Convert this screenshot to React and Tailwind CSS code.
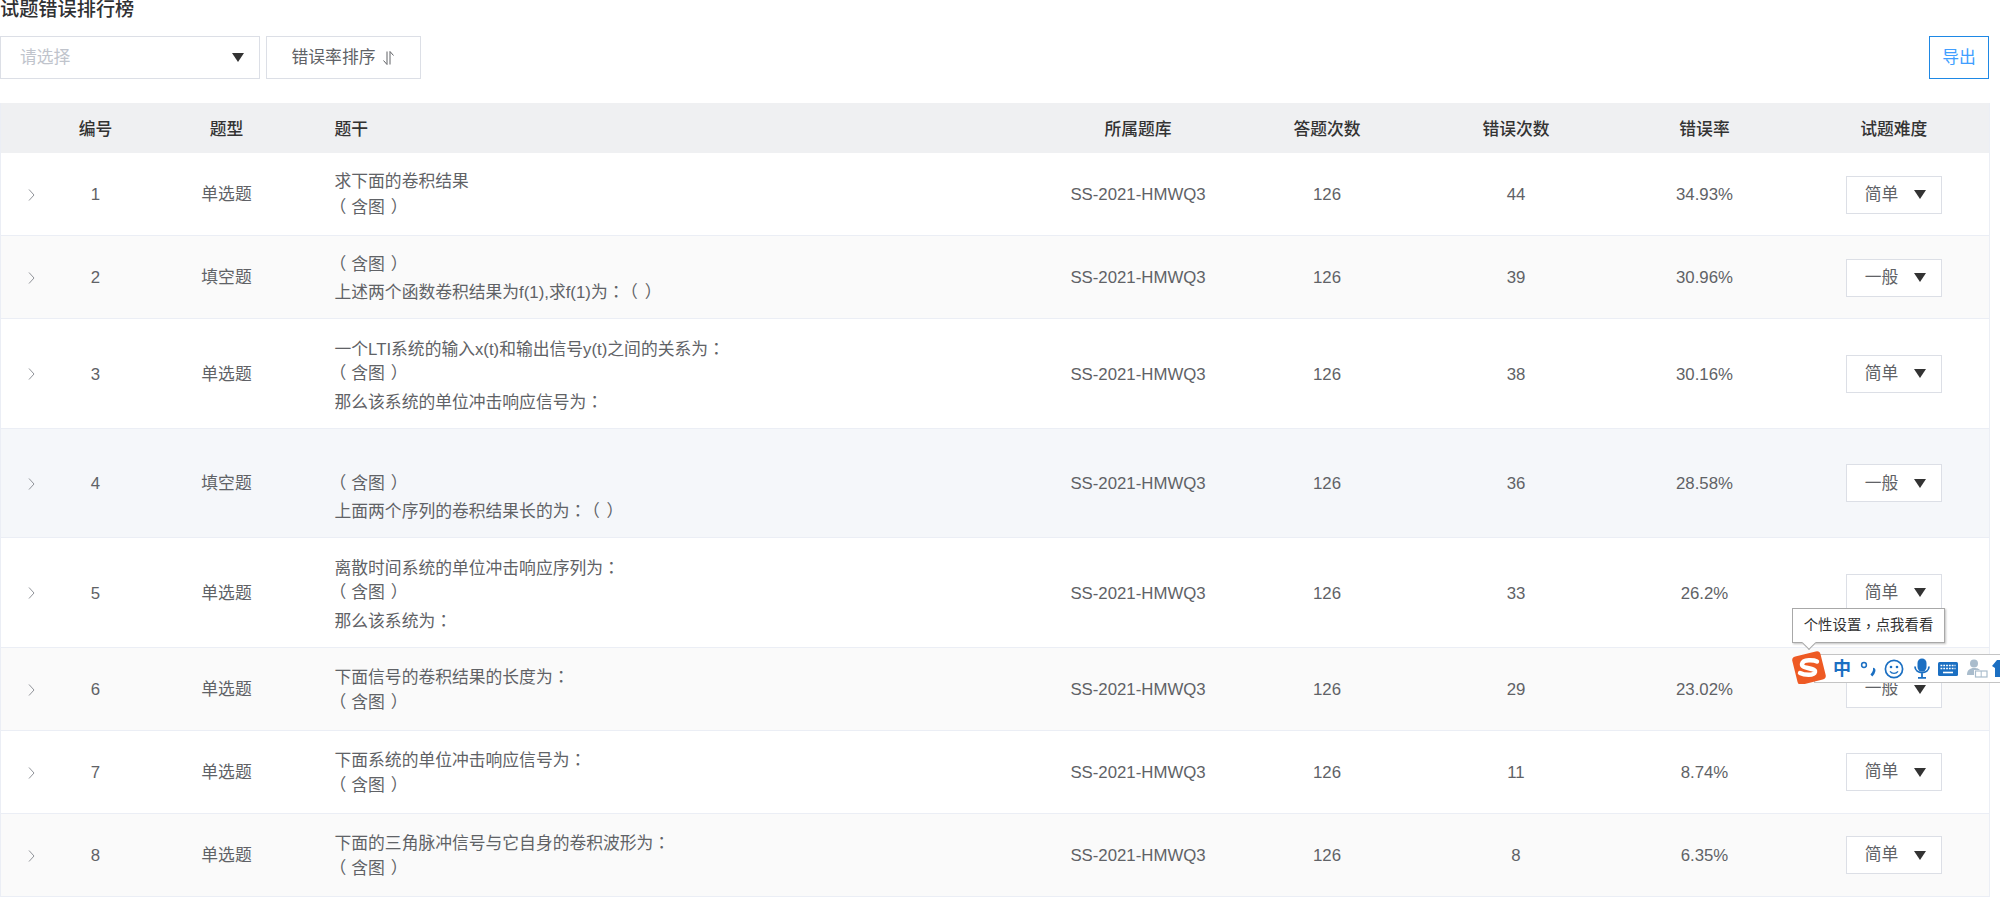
import React from 'react';

const rows = [
  { id: 1, type: '单选题', lines: ['求下面的卷积结果', '（含图）'], wrong: 44, rate: '34.93%', level: '简单' },
  { id: 2, type: '填空题', lines: ['（含图）', '上述两个函数卷积结果为f(1),求f(1)为：（ ）'], wrong: 39, rate: '30.96%', level: '一般' },
  { id: 3, type: '单选题', lines: ['一个LTI系统的输入x(t)和输出信号y(t)之间的关系为：', '（含图）', '那么该系统的单位冲击响应信号为：'], wrong: 38, rate: '30.16%', level: '简单' },
  { id: 4, type: '填空题', lines: ['', '（含图）', '上面两个序列的卷积结果长的为：（ ）'], wrong: 36, rate: '28.58%', level: '一般' },
  { id: 5, type: '单选题', lines: ['离散时间系统的单位冲击响应序列为：', '（含图）', '那么该系统为：'], wrong: 33, rate: '26.2%', level: '简单' },
  { id: 6, type: '单选题', lines: ['下面信号的卷积结果的长度为：', '（含图）'], wrong: 29, rate: '23.02%', level: '一般' },
  { id: 7, type: '单选题', lines: ['下面系统的单位冲击响应信号为：', '（含图）'], wrong: 11, rate: '8.74%', level: '简单' },
  { id: 8, type: '单选题', lines: ['下面的三角脉冲信号与它自身的卷积波形为：', '（含图）'], wrong: 8, rate: '6.35%', level: '简单' },
];

// full-width punctuation sits centred in its cell in the reference
function Stem({ text }) {
  return text.split(/(（ ）|（|）|：|，)/).map((part, i) => {
    if (part === '（ ）') {
      return (
        <span key={i}>
          <span className="inline-block -translate-x-[0.2em]">（</span>
          <span className="inline-block translate-x-[0.2em]">）</span>
        </span>
      );
    }
    if (part === '（') return <span key={i} className="inline-block -translate-x-[0.3em]">（</span>;
    if (part === '）') return <span key={i} className="inline-block translate-x-[0.35em]">）</span>;
    if (part === '：' || part === '，') {
      return <span key={i} className="inline-block font-['Noto_Sans_CJK_TC',sans-serif]">{part}</span>;
    }
    return part;
  });
}

function Caret() {
  return (
    <svg width="12" height="9" viewBox="0 0 12 9" className="shrink-0 text-[#333]">
      <path d="M0 0H12L6 9Z" fill="currentColor" />
    </svg>
  );
}

function SogouBar() {
  return (
    <div className="absolute left-[1792px] top-[608px] w-[208px] h-[76px] overflow-hidden">
      <div className="relative w-[153px] h-[35px] bg-white border border-[#a8a8a8] shadow-[1px_1px_2px_rgba(0,0,0,0.25)] flex items-center justify-center text-[14.4px] text-[#333] whitespace-nowrap">
        <Stem text="个性设置，点我看看" />
        <span className="absolute left-[11px] bottom-[-6px] w-[10px] h-[10px] bg-white border-r border-b border-[#a8a8a8] rotate-45" />
      </div>
      <div className="absolute left-[22px] top-[46px] w-[190px] h-[29px] bg-white border border-[#c4c4c4] flex items-center">
        <span className="ml-[18px] w-[18px] text-[18px] leading-none font-bold text-[#1b6fc2]">中</span>
        <svg width="16" height="18" viewBox="0 0 16 18" className="ml-[9px] shrink-0 text-[#1b6fc2]">
          <circle cx="4" cy="5" r="2.4" fill="none" stroke="currentColor" strokeWidth="1.5" />
          <path d="M13 9c1.6 0 2 2.6-1.6 6.5" fill="none" stroke="currentColor" strokeWidth="2.6" />
        </svg>
        <svg width="20" height="20" viewBox="0 0 20 20" className="ml-[8px] shrink-0 text-[#1b6fc2]">
          <circle cx="10" cy="10" r="8.6" fill="none" stroke="currentColor" strokeWidth="1.7" />
          <circle cx="7" cy="8" r="1.3" fill="currentColor" />
          <circle cx="13" cy="8" r="1.3" fill="currentColor" />
          <path d="M6 12.4c2 2.6 6 2.6 8 0" fill="none" stroke="currentColor" strokeWidth="1.4" />
        </svg>
        <svg width="16" height="21" viewBox="0 0 16 21" className="ml-[10px] shrink-0 text-[#1b6fc2]">
          <rect x="3.500" y="0.500" width="9" height="13" rx="4.500" fill="currentColor" />
          <path d="M1 8.500c0 8 14 8 14 0M8 15v4M4 19.800h8" fill="none" stroke="currentColor" strokeWidth="1.8" />
        </svg>
        <svg width="20" height="14" viewBox="0 0 20 14" className="ml-[8px] shrink-0">
          <rect width="20" height="14" rx="1.500" fill="#1b6fc2" />
          <path d="M2.500 3.500h15M2.500 6.500h15" stroke="#fff" strokeWidth="1.500" strokeDasharray="1.800 1" />
          <path d="M5 10.500h10" stroke="#fff" strokeWidth="1.600" />
        </svg>
        <svg width="22" height="19" viewBox="0 0 22 19" className="ml-[8px] shrink-0 text-[#a9bccc]">
          <circle cx="8" cy="4.500" r="4" fill="currentColor" />
          <path d="M1 16c0-5 3-7 7-7s5 1 6 2H8v5Z" fill="currentColor" />
          <rect x="9.500" y="12" width="11.500" height="6" fill="none" stroke="currentColor" strokeWidth="1.200" />
          <path d="M15.200 12v6" stroke="currentColor" strokeWidth="1" />
        </svg>
        <svg width="16" height="17" viewBox="0 0 16 17" className="ml-[4px] shrink-0 text-[#1b6fc2]">
          <path d="M5 0h6l5 6-3 2v9H3V8L0 6Z" fill="currentColor" />
        </svg>
      </div>
      <svg width="36" height="36" viewBox="0 0 36 36" className="absolute left-[-1px] top-[42px]">
        <rect x="3.500" y="3.500" width="29" height="29" rx="4" fill="#ee5a24" transform="rotate(-14 18 18)" />
        <path d="M26 11.500c-3-1.500-14-2.500-15 2.500s14 3.500 13 8c-1 4-11 3-15 1" fill="none" stroke="#fff" strokeWidth="4.400" strokeLinecap="round" />
      </svg>
    </div>
  );
}

export default function App() {
  return (
    <div className="relative w-[2000px] h-[897px] overflow-hidden bg-white font-['Liberation_Sans','Noto_Sans_CJK_SC',sans-serif] text-[16.8px] text-[#606266]">
      <h1 className="h-[36px] text-[19.2px] leading-[20px] font-medium text-[#303133]">试题错误排行榜</h1>
      <div className="w-[1989px] flex items-center gap-[6px]">
        <div className="w-[260px] h-[43px] pl-[19px] pr-[15px] flex items-center justify-between border border-[#dcdfe6] text-[#c0c4cc]">
          <span>请选择</span>
          <Caret />
        </div>
        <div className="w-[155px] h-[43px] flex items-center justify-center gap-[7px] border border-[#dcdfe6]">
          <span>错误率排序</span>
          <svg width="13" height="14" viewBox="0 0 13 14" className="text-[#606266]">
            <path d="M5 0.500v13L1.500 9.500M8 13.500V0.500l3.500 4" fill="none" stroke="currentColor" strokeWidth="1" />
          </svg>
        </div>
        <button className="ml-auto w-[60px] h-[43px] border border-[#1e88e5] text-[#409eff]">导出</button>
      </div>

      <table className="mt-[24px] w-[1989px] table-fixed border-collapse border-x border-[#ebeef5]">
        <colgroup>
          <col className="w-[62px]" />
          <col className="w-[66px]" />
          <col className="w-[196px]" />
          <col className="w-[719px]" />
          <col className="w-[189px]" />
          <col className="w-[189px]" />
          <col className="w-[189px]" />
          <col className="w-[188px]" />
          <col className="w-[191px]" />
        </colgroup>
        <thead>
          <tr className="h-[50px] bg-[#eff0f2] text-[#333] text-center">
            <th className="font-medium" />
            <th className="font-medium pt-[3px]">编号</th>
            <th className="font-medium pt-[3px]">题型</th>
            <th className="font-medium pt-[3px] text-left px-[10px]">题干</th>
            <th className="font-medium pt-[3px]">所属题库</th>
            <th className="font-medium pt-[3px]">答题次数</th>
            <th className="font-medium pt-[3px]">错误次数</th>
            <th className="font-medium pt-[3px]">错误率</th>
            <th className="font-medium pt-[3px]">试题难度</th>
          </tr>
        </thead>
        <tbody>
          {rows.map((row) => (
            <tr
              key={row.id}
              className={`border-b border-[#ebeef5] text-center ${row.id === 4 ? 'bg-[#f5f7fa]' : row.id % 2 === 0 ? 'bg-[#fafafa]' : 'bg-white'}`}
            >
              <td className="pt-[2px]">
                <svg width="7" height="12" viewBox="0 0 7 12" className="mx-auto text-[#909399]">
                  <path d="M1 0.500l5 5.500-5 5.500" fill="none" stroke="currentColor" strokeWidth="1" />
                </svg>
              </td>
              <td className="pt-[2px]">{row.id}</td>
              <td className="pt-[2px]">{row.type}</td>
              <td className="px-[10px] pt-[15.5px] pb-[13.5px] text-left">
                {row.lines.map((line, i) => (
                  <div key={i} className="h-[26.5px] leading-[26.5px] whitespace-nowrap">
                    <Stem text={line} />
                  </div>
                ))}
              </td>
              <td className="pt-[2px]">SS-2021-HMWQ3</td>
              <td className="pt-[2px]">126</td>
              <td className="pt-[2px]">{row.wrong}</td>
              <td className="pt-[2px]">{row.rate}</td>
              <td className="pt-[1px]">
                <div className="mx-auto w-[96px] h-[38px] pl-[18px] pr-[15px] flex items-center justify-between border border-[#dcdfe6] bg-white">
                  <span>{row.level}</span>
                  <Caret />
                </div>
              </td>
            </tr>
          ))}
        </tbody>
      </table>
      <SogouBar />
    </div>
  );
}
